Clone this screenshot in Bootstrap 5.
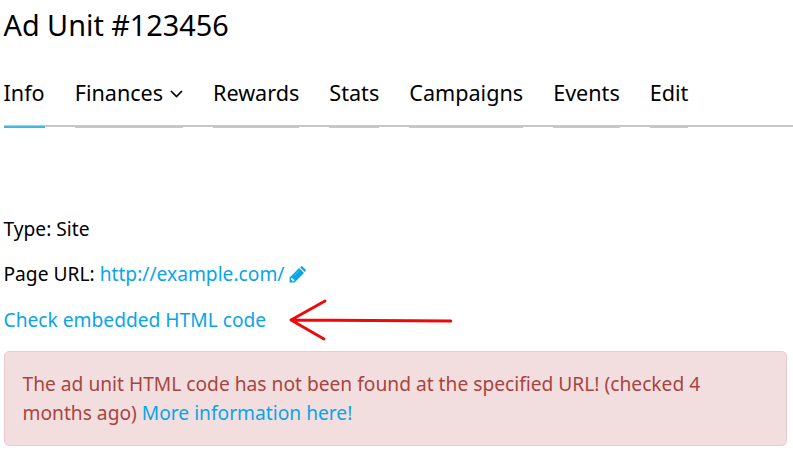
<!DOCTYPE html>
<html lang="en">
<head>
<meta charset="utf-8">
<meta name="viewport" content="width=device-width, initial-scale=1">
<title>Ad Unit #123456</title>
<link rel="stylesheet" href="https://cdn.jsdelivr.net/npm/bootstrap@5.3.0/dist/css/bootstrap.min.css">
<style>
body { font-family: "Noto Sans", sans-serif; font-size: 19.2px; line-height: 29px; color: #000; background: #fff; overflow: hidden; }
a { color: #09a5e8; }
.page { padding-left: 3.5px; }
.page-title { font-size: 28.8px; line-height: 40px; margin: 5px 0 0; font-weight: 400; }
.unit-tabs { gap: 30px; margin-top: 30px; height: 52px; border-bottom: 2px solid #c7c7c7; }
.unit-tabs .nav-link { padding: 0; height: 53px; font-size: 21.6px; line-height: 35px; color: #000; border-bottom: 2px solid #c7c7c7; border-radius: 0; white-space: nowrap; }
.unit-tabs .nav-link.active { border-color: #3bb9e0; }
.chevron { width: 13px; height: 8px; margin-left: 6.8px; position: relative; top: -1px; }
.details { margin-top: 87px; }
.details p { margin: 0 0 16px; }
.details .url-row { margin-bottom: 17px; }
.pencil { width: 17px; height: 17px; margin: 1px 0 0 5px; color: #09a5e8; }
.arrow { width: 166px; height: 44px; margin: -7px 0 -8px 20px; }
.notice { color: #a94442; background: #f2dede; border: 1px solid #e9ccd1; border-radius: 5px; padding: 16.5px 18px 18.5px; margin: 17px 6px 0 0; }
</style>
<script src="https://cdn.jsdelivr.net/npm/bootstrap@5.3.0/dist/js/bootstrap.bundle.min.js"></script>
</head>
<body>
<main class="page">
  <h1 class="page-title">Ad Unit #123456</h1>
  <ul class="nav unit-tabs flex-nowrap">
    <li class="nav-item"><a class="nav-link active" href="#">Info</a></li>
    <li class="nav-item"><a class="nav-link" href="#">Finances<svg class="chevron" viewBox="0 0 13 8" fill="none" stroke="currentColor" stroke-width="1.7"><path d="M1 1l5.5 5.5L12 1"/></svg></a></li>
    <li class="nav-item"><a class="nav-link" href="#">Rewards</a></li>
    <li class="nav-item"><a class="nav-link" href="#">Stats</a></li>
    <li class="nav-item"><a class="nav-link" href="#">Campaigns</a></li>
    <li class="nav-item"><a class="nav-link" href="#">Events</a></li>
    <li class="nav-item"><a class="nav-link" href="#">Edit</a></li>
  </ul>
  <section class="details">
    <p>Type: Site</p>
    <p class="d-flex align-items-center url-row">Page URL:&nbsp;<a class="text-decoration-none" href="#">http://example.com/</a><a class="d-flex" href="#" aria-label="Edit URL"><svg class="pencil" viewBox="0 0 17 17" fill="currentColor"><path d="M.6 16.6V11.6L10.1 2.1L15 7L5.5 16.6Z"/><path d="M11 1.3L12 .4Q12.7-.2 13.4.4L16.6 3.6Q17.2 4.3 16.6 5L15.8 6.1Z"/><path d="M2 12.8V14H3.2V15.2H4.6L5.5 14.3L2.9 11.7Z" fill="#fff"/><path d="M4.6 10.1L10.2 4.5" stroke="#fff" stroke-width=".3"/></svg></a></p>
    <p class="d-flex align-items-center"><a class="text-decoration-none" href="#">Check embedded HTML code</a><svg class="arrow" viewBox="0 0 166 44" fill="none" stroke="#f00808" stroke-width="2.8" stroke-linecap="round" stroke-linejoin="round"><path d="M39 3L5 22L38 41M5 22L165 23"/></svg></p>
    <div class="alert notice" role="alert">The ad unit HTML code has not been found at the specified URL! (checked 4 months ago) <a class="text-decoration-none" href="#">More information here!</a></div>
  </section>
</main>
</body>
</html>
